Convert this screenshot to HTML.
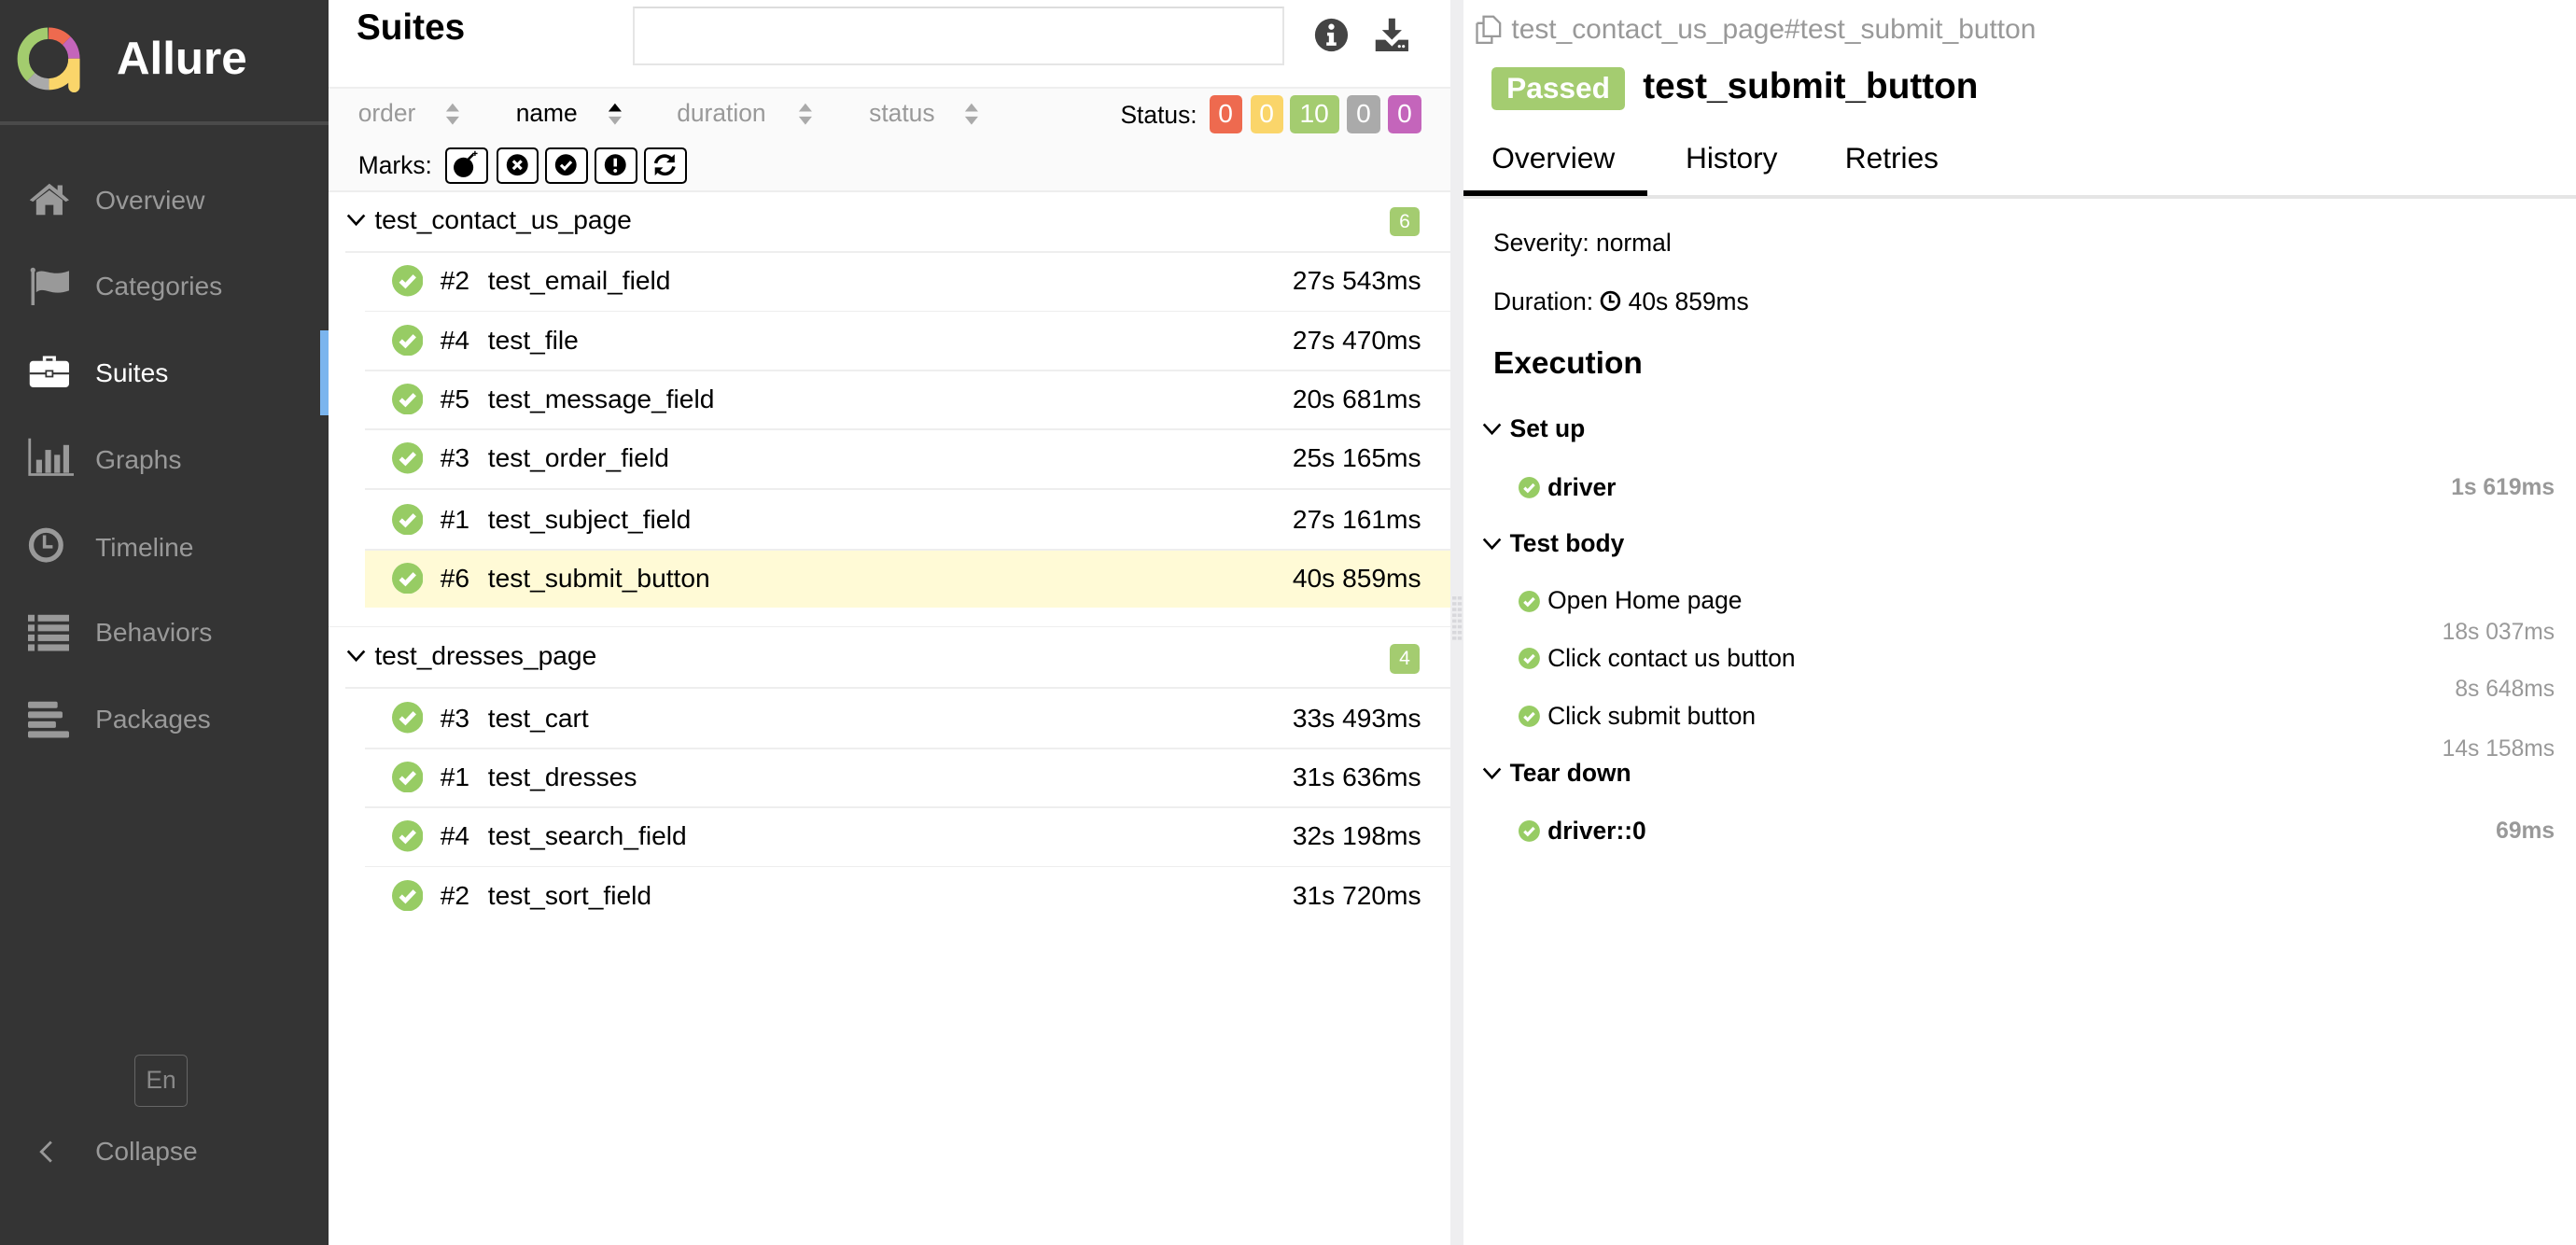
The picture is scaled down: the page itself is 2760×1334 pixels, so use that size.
<!DOCTYPE html>
<html><head><meta charset="utf-8">
<style>
*{margin:0;padding:0;box-sizing:border-box}
html,body{width:2760px;height:1334px;overflow:hidden;background:#fff}
#root{position:relative;width:1568px;height:758px;zoom:1.76021;font-family:"Liberation Sans",Arial,sans-serif;color:#000}
.a{position:absolute;white-space:nowrap}
.side{position:absolute;left:0;top:0;width:200px;height:758px;background:#343434}
.nav{position:absolute;left:58px;font-size:16px;line-height:20px;color:#999}
.ico{position:absolute;left:17px}
.t16{font-size:16px;line-height:20px}
.gray{color:#999}
.badge{position:absolute;top:58px;height:23px;border-radius:3px;color:#fff;font-size:16px;line-height:23px;text-align:center}
.mk{position:absolute;top:90px;width:26px;height:22px;border:1.5px solid #000;border-radius:3px;background:#fff}
.hl{position:absolute;height:1px;background:#eeeeee}
.row{position:absolute;left:222px;width:661px;height:36px}
.chk{position:absolute}
</style></head><body><div id="root">

<div class="side">
  <svg class="a" style="left:9px;top:15px" width="44" height="46" viewBox="0 0 44 46">
    <g transform="rotate(-90 20.5 21)" fill="none" stroke-width="7">
      <circle cx="20.5" cy="21" r="15.5" stroke="#a3cc6e" pathLength="100" stroke-dasharray="37.5 100" stroke-dashoffset="-62.5"/>
      <circle cx="20.5" cy="21" r="15.5" stroke="#ee6a4f" pathLength="100" stroke-dasharray="12.5 100"/>
      <circle cx="20.5" cy="21" r="15.5" stroke="#c465bb" pathLength="100" stroke-dasharray="12.5 100" stroke-dashoffset="-12.5"/>
      <circle cx="20.5" cy="21" r="15.5" stroke="#fad56a" pathLength="100" stroke-dasharray="25 100" stroke-dashoffset="-25"/>
      <circle cx="20.5" cy="21" r="15.5" stroke="#aaa" pathLength="100" stroke-dasharray="12.5 100" stroke-dashoffset="-50"/>
    </g>
    <path d="M32.5 21 h7 v17 a3.5 3.5 0 0 1 -7 0z" fill="#fad56a"/>
  </svg>
  <div class="a" style="left:71px;top:19px;font-size:28px;line-height:34px;font-weight:bold;color:#fff">Allure</div>
  <div class="a" style="left:0;top:74px;width:200px;height:2px;background:#4a4a4a"></div>

  <svg class="ico" style="top:111px" width="26" height="20" viewBox="0 0 26 20"><path d="M13 1 L1 11 L3 12 L13 4 L23 12 L25 11 L21 7.5 V2 H18 V5 Z M5 11 V20 H10.5 V14 H15.5 V20 H21 V11 L13 5 Z" fill="#999"/></svg>
  <div class="nav" style="top:112px">Overview</div>
  <svg class="ico" style="top:162px" width="26" height="24" viewBox="0 0 26 24"><rect x="2" y="2" width="2" height="22" fill="#999"/><circle cx="3" cy="2.5" r="1.5" fill="#999"/><path d="M5 4 C10 1 14 7 25 3 V15 C14 19 10 12 5 16Z" fill="#999"/></svg>
  <div class="nav" style="top:164px">Categories</div>
  <svg class="ico" style="top:215px" width="26" height="22" viewBox="0 0 26 22"><path d="M9 2 h8 v3 h-2 v-1.5 h-4 v1.5 h-2z" fill="#fff"/><rect x="1" y="5" width="24" height="16" rx="2" fill="#fff"/><rect x="1" y="12" width="24" height="1.2" fill="#343434"/><rect x="11" y="11" width="4" height="3.5" fill="#fff" stroke="#343434" stroke-width="1"/></svg>
  <div class="nav" style="top:217px;color:#fff">Suites</div>
  <div class="a" style="left:195px;top:201px;width:5px;height:52px;background:#7bb5ee"></div>
  <svg class="ico" style="top:266px" width="28" height="24" viewBox="0 0 28 24"><path d="M1 1 V23 H28" stroke="#999" stroke-width="1.6" fill="none"/><rect x="5" y="14" width="3.5" height="8" fill="#999"/><rect x="10.5" y="8" width="3.5" height="14" fill="#999"/><rect x="16" y="11" width="3.5" height="11" fill="#999"/><rect x="21.5" y="5" width="3.5" height="17" fill="#999"/></svg>
  <div class="nav" style="top:270px">Graphs</div>
  <svg class="ico" style="top:320px" width="24" height="24" viewBox="0 0 24 24"><circle cx="11" cy="12" r="9" stroke="#999" stroke-width="3" fill="none"/><path d="M10 6 V13 H15" stroke="#999" stroke-width="2" fill="none"/></svg>
  <div class="nav" style="top:323px">Timeline</div>
  <svg class="ico" style="top:373px" width="26" height="24" viewBox="0 0 26 24"><g fill="#999"><rect x="0" y="1" width="4" height="4"/><rect x="6" y="1" width="19" height="4"/><rect x="0" y="7" width="4" height="4"/><rect x="6" y="7" width="19" height="4"/><rect x="0" y="13" width="4" height="4"/><rect x="6" y="13" width="19" height="4"/><rect x="0" y="19" width="4" height="4"/><rect x="6" y="19" width="19" height="4"/></g></svg>
  <div class="nav" style="top:375px">Behaviors</div>
  <svg class="ico" style="top:426px" width="26" height="24" viewBox="0 0 26 24"><g fill="#999"><rect x="0" y="1" width="18" height="4" rx="1"/><rect x="0" y="7" width="21" height="4" rx="1"/><rect x="0" y="13" width="17" height="4" rx="1"/><rect x="0" y="19" width="25" height="4" rx="1"/></g></svg>
  <div class="nav" style="top:428px">Packages</div>

  <div class="a" style="left:82px;top:642px;width:32px;height:32px;border:1px solid #666;border-radius:3px;color:#888;font-size:15px;line-height:30px;text-align:center">En</div>
  <svg class="a" style="left:22px;top:693px" width="12" height="16" viewBox="0 0 12 16"><path d="M9 2 L3 8 L9 14" stroke="#999" stroke-width="1.6" fill="none"/></svg>
  <div class="nav" style="top:691px">Collapse</div>
</div>

<!-- middle -->
<div class="a" style="left:217px;top:4px;font-size:22px;line-height:26px;font-weight:bold">Suites</div>
<div class="a" style="left:385px;top:4px;width:397px;height:36px;border:1.5px solid #e5e5e5;border-top-color:#ddd"></div>
<svg class="a" style="left:800px;top:11px" width="21" height="21" viewBox="0 0 21 21"><circle cx="10.5" cy="10.5" r="10" fill="#444"/><circle cx="10.5" cy="5.5" r="1.8" fill="#fff"/><path d="M8 9 H12 V15 H13.5 V17 H7.5 V15 H9 V11 H8Z" fill="#fff"/></svg>
<svg class="a" style="left:836px;top:10px" width="22" height="22" viewBox="0 0 22 22"><path d="M9 1 H13 V8 H17 L11 14 L5 8 H9Z" fill="#444"/><path d="M1 14 H7 L11 18 L15 14 H21 V21 H1Z" fill="#444"/><circle cx="15.5" cy="18" r=".9" fill="#fff"/><circle cx="18" cy="18" r=".9" fill="#fff"/></svg>

<div class="a" style="left:200px;top:53px;width:683px;height:64px;background:#fafafa;border-top:1.5px solid #eee;border-bottom:1.5px solid #eee"></div>
<div class="a t16 gray" style="left:218px;top:59px;font-size:15px">order</div>
<div class="a t16" style="left:314px;top:59px;font-size:15px">name</div>
<div class="a t16 gray" style="left:412px;top:59px;font-size:15px">duration</div>
<div class="a t16 gray" style="left:529px;top:59px;font-size:15px">status</div>
<svg class="a" style="left:271px;top:62px" width="9" height="15"><path d="M4.5 1 L8.5 6 H0.5Z M4.5 14 L8.5 9 H0.5Z" fill="#aaa"/></svg>
<svg class="a" style="left:370px;top:62px" width="9" height="15"><path d="M4.5 1 L8.5 6 H0.5Z" fill="#000"/><path d="M4.5 14 L8.5 9 H0.5Z" fill="#aaa"/></svg>
<svg class="a" style="left:486px;top:62px" width="9" height="15"><path d="M4.5 1 L8.5 6 H0.5Z M4.5 14 L8.5 9 H0.5Z" fill="#aaa"/></svg>
<svg class="a" style="left:587px;top:62px" width="9" height="15"><path d="M4.5 1 L8.5 6 H0.5Z M4.5 14 L8.5 9 H0.5Z" fill="#aaa"/></svg>
<div class="a t16" style="left:682px;top:60px;font-size:15px">Status:</div>
<div class="badge" style="left:736px;width:20px;background:#ee6a4f">0</div>
<div class="badge" style="left:761px;width:20px;background:#fad56a">0</div>
<div class="badge" style="left:785px;width:30px;background:#a4cc70">10</div>
<div class="badge" style="left:820px;width:20px;background:#aaa">0</div>
<div class="badge" style="left:845px;width:20px;background:#c465bb">0</div>

<div class="a t16" style="left:218px;top:91px;font-size:15px">Marks:</div>
<div class="mk" style="left:271px"><svg width="23" height="19" viewBox="0 0 23 19"><circle cx="10" cy="11" r="6" fill="#000"/><path d="M13 6 L16 3" stroke="#000" stroke-width="1.5"/><path d="M17 1 v3 M15.5 2.5 h3" stroke="#000" stroke-width=".8"/></svg></div>
<div class="mk" style="left:302px"><svg width="23" height="19" viewBox="0 0 23 19"><circle cx="11.5" cy="9.5" r="6.5" fill="#000"/><path d="M9 7 L14 12 M14 7 L9 12" stroke="#fff" stroke-width="1.8"/></svg></div>
<div class="mk" style="left:332px"><svg width="23" height="19" viewBox="0 0 23 19"><circle cx="11.5" cy="9.5" r="6.5" fill="#000"/><path d="M8.5 9.5 L10.8 11.8 L14.8 7.5" stroke="#fff" stroke-width="1.8" fill="none"/></svg></div>
<div class="mk" style="left:362px"><svg width="23" height="19" viewBox="0 0 23 19"><circle cx="11.5" cy="9.5" r="6.5" fill="#000"/><path d="M11.5 5.5 V10.5" stroke="#fff" stroke-width="2"/><circle cx="11.5" cy="13" r="1.1" fill="#fff"/></svg></div>
<div class="mk" style="left:392px"><svg width="23" height="19" viewBox="0 0 23 19"><path d="M6 8.5 A5.5 5.5 0 0 1 16 6.5" stroke="#000" stroke-width="2" fill="none"/><path d="M17.5 3 V8 H12.5Z" fill="#000"/><path d="M17 10.5 A5.5 5.5 0 0 1 7 12.5" stroke="#000" stroke-width="2" fill="none"/><path d="M5.5 16 V11 H10.5Z" fill="#000"/></svg></div>

<!-- group 1 -->
<svg class="a" style="left:211px;top:129px" width="12" height="10"><path d="M1 2 L6 7.5 L11 2" stroke="#000" stroke-width="1.5" fill="none"/></svg>
<div class="a t16" style="left:228px;top:124px">test_contact_us_page</div>
<div class="a" style="left:846px;top:126px;width:18px;height:18px;background:#a4cc70;border-radius:3px;color:#fff;font-size:12px;line-height:18px;text-align:center">6</div>
<div class="hl" style="left:210px;top:153px;width:673px"></div>

<div class="row" style="top:334px;height:36px;background:#fffad6"></div>

<div id="rows"></div>

<div class="hl" style="left:200px;top:381px;width:683px"></div>
<svg class="a" style="left:211px;top:394px" width="12" height="10"><path d="M1 2 L6 7.5 L11 2" stroke="#000" stroke-width="1.5" fill="none"/></svg>
<div class="a t16" style="left:228px;top:389px">test_dresses_page</div>
<div class="a" style="left:846px;top:392px;width:18px;height:18px;background:#a4cc70;border-radius:3px;color:#fff;font-size:12px;line-height:18px;text-align:center">4</div>
<div class="hl" style="left:210px;top:418px;width:673px"></div>

<!-- splitter -->
<div class="a" style="left:883px;top:0;width:8px;height:758px;background:#eeeef0"></div>
<svg class="a" style="left:884px;top:363px" width="6" height="28"><g fill="#d8d8dc"><rect x="0" y="0" width="2.5" height="2"/><rect x="3.3" y="0" width="2.5" height="2"/><rect x="0" y="3.5" width="2.5" height="2"/><rect x="3.3" y="3.5" width="2.5" height="2"/><rect x="0" y="7" width="2.5" height="2"/><rect x="3.3" y="7" width="2.5" height="2"/><rect x="0" y="10.5" width="2.5" height="2"/><rect x="3.3" y="10.5" width="2.5" height="2"/><rect x="0" y="14" width="2.5" height="2"/><rect x="3.3" y="14" width="2.5" height="2"/><rect x="0" y="17.5" width="2.5" height="2"/><rect x="3.3" y="17.5" width="2.5" height="2"/><rect x="0" y="21" width="2.5" height="2"/><rect x="3.3" y="21" width="2.5" height="2"/><rect x="0" y="24.5" width="2.5" height="2"/><rect x="3.3" y="24.5" width="2.5" height="2"/></g></svg>

<!-- right -->
<svg class="a" style="left:897px;top:9px" width="18" height="18" viewBox="0 0 18 18"><path d="M6 1 H12 L16 5 V13 H6Z" fill="none" stroke="#999" stroke-width="1.3"/><path d="M2 5 H6 M2 5 V17 H11 V13" fill="none" stroke="#999" stroke-width="1.3"/></svg>
<div class="a gray" style="left:920px;top:8px;font-size:17px;line-height:20px">test_contact_us_page#test_submit_button</div>
<div class="a" style="left:908px;top:41px;width:81px;height:26px;background:#a4cc70;border-radius:3px;color:#fff;font-weight:bold;font-size:18px;line-height:26px;text-align:center">Passed</div>
<div class="a" style="left:1000px;top:40px;font-size:22px;line-height:26px;font-weight:bold">test_submit_button</div>
<div class="a" style="left:908px;top:85px;font-size:18px;line-height:22px">Overview</div>
<div class="a" style="left:1026px;top:85px;font-size:18px;line-height:22px">History</div>
<div class="a" style="left:1123px;top:85px;font-size:18px;line-height:22px">Retries</div>
<div class="a" style="left:891px;top:119px;width:677px;height:2px;background:#e5e5e5"></div>
<div class="a" style="left:891px;top:116px;width:112px;height:3.5px;background:#000"></div>

<div class="a" style="left:909px;top:139px;font-size:15px;line-height:18px">Severity: normal</div>
<div class="a" style="left:909px;top:175px;font-size:15px;line-height:18px">Duration: <svg width="13" height="13" viewBox="0 0 13 13" style="vertical-align:-1px"><circle cx="6.5" cy="6.5" r="5.3" fill="none" stroke="#000" stroke-width="1.6"/><path d="M6.3 3 V7 H9" fill="none" stroke="#000" stroke-width="1.4"/></svg> 40s 859ms</div>
<div class="a" style="left:909px;top:211px;font-size:19px;line-height:22px;font-weight:bold">Execution</div>

<div id="steps"></div>

<script>
var rows=[[171,"#2","test_email_field","27s 543ms"],[207,"#4","test_file","27s 470ms"],[243,"#5","test_message_field","20s 681ms"],[279,"#3","test_order_field","25s 165ms"],[316,"#1","test_subject_field","27s 161ms"],[352,"#6","test_submit_button","40s 859ms"],[437,"#3","test_cart","33s 493ms"],[473,"#1","test_dresses","31s 636ms"],[509,"#4","test_search_field","32s 198ms"],[545,"#2","test_sort_field","31s 720ms"]];
var h="";
var chk=function(x,y,r){return '<svg class="a" style="left:'+(x-r)+'px;top:'+(y-r)+'px" width="'+(2*r)+'" height="'+(2*r)+'" viewBox="0 0 20 20"><circle cx="10" cy="10" r="10" fill="#97cc64"/><path d="M5.5 10.2 L8.6 13.2 L14.5 7" stroke="#fff" stroke-width="2.8" fill="none"/></svg>';};
rows.forEach(function(r,i){
 h+=chk(248,r[0],9.5);
 h+='<div class="a t16" style="left:268px;top:'+(r[0]-10)+'px">'+r[1]+'</div>';
 h+='<div class="a t16" style="left:297px;top:'+(r[0]-10)+'px">'+r[2]+'</div>';
 h+='<div class="a t16" style="right:'+(1568-865)+'px;top:'+(r[0]-10)+'px">'+r[3]+'</div>';
 if(i!=5&&i!=9) h+='<div class="hl" style="left:222px;top:'+(r[0]+18)+'px;width:661px"></div>';
});
document.getElementById("rows").innerHTML=h;
var s="";
var sec=function(y,t){return '<svg class="a" style="left:902px;top:'+(y-5)+'px" width="12" height="10"><path d="M1 2 L6 7.5 L11 2" stroke="#000" stroke-width="1.5" fill="none"/></svg><div class="a" style="left:919px;top:'+(y-9)+'px;font-size:15px;line-height:18px;font-weight:bold">'+t+'</div>';};
var st=function(y,t,b,d,dy){return chk(931,y,6.5)+'<div class="a" style="left:942px;top:'+(y-9)+'px;font-size:15px;line-height:18px;'+(b?'font-weight:bold':'')+'">'+t+'</div><div class="a" style="right:13px;top:'+(dy-8)+'px;font-size:14px;line-height:16px;color:#999;'+(b?'font-weight:bold':'')+'">'+d+'</div>';};
s+=sec(261,"Set up")+st(297,"driver",1,"1s 619ms",297)+sec(331,"Test body")+st(366,"Open Home page",0,"18s 037ms",385)+st(401,"Click contact us button",0,"8s 648ms",420)+st(436,"Click submit button",0,"14s 158ms",456)+sec(471,"Tear down")+st(506,"driver::0",1,"69ms",506);
document.getElementById("steps").innerHTML=s;
</script>
</div></body></html>
